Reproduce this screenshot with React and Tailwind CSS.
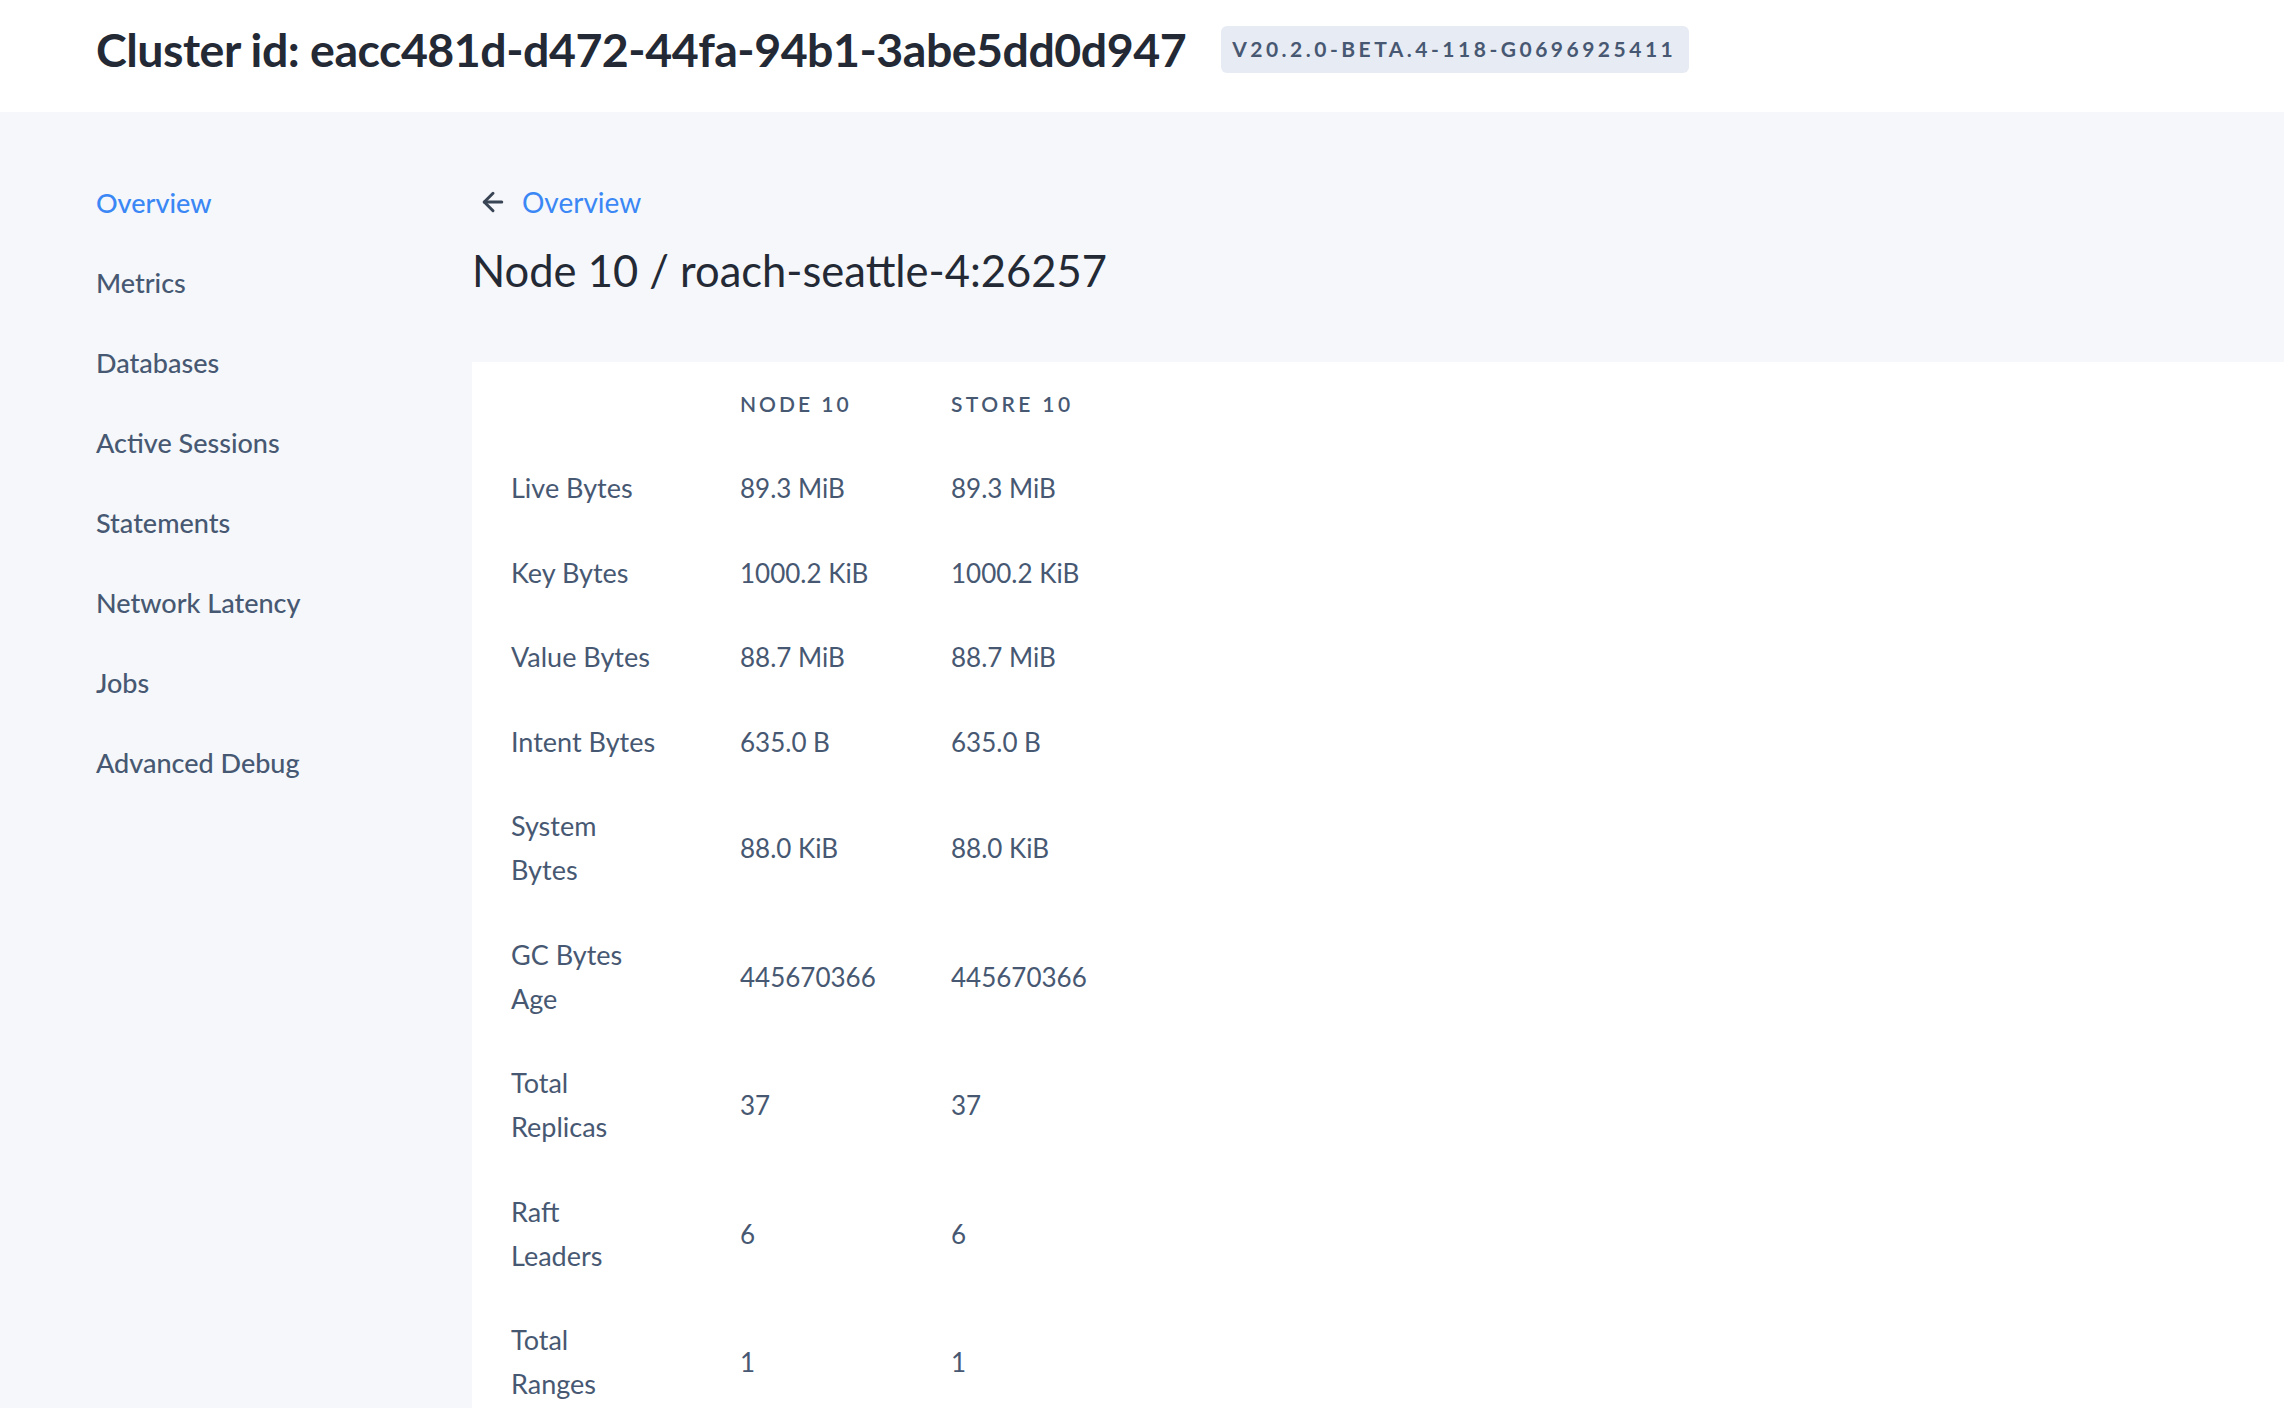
import { ArrowLeft } from "lucide-react";

const navItems = [
  "Overview",
  "Metrics",
  "Databases",
  "Active Sessions",
  "Statements",
  "Network Latency",
  "Jobs",
  "Advanced Debug",
];

// labels are split where the narrow column wraps them
const rows = [
  { label: ["Live Bytes"], value: "89.3 MiB" },
  { label: ["Key Bytes"], value: "1000.2 KiB" },
  { label: ["Value Bytes"], value: "88.7 MiB" },
  { label: ["Intent Bytes"], value: "635.0 B" },
  { label: ["System", "Bytes"], value: "88.0 KiB" },
  { label: ["GC Bytes", "Age"], value: "445670366" },
  { label: ["Total", "Replicas"], value: "37" },
  { label: ["Raft", "Leaders"], value: "6" },
  { label: ["Total", "Ranges"], value: "1" },
];

export default function App() {
  return (
    <div className="min-h-screen bg-[#f5f7fa] font-['Lato','Noto_Sans',sans-serif]">
      {/* Header */}
      <header className="flex h-[112px] items-center bg-white pb-[14px] pl-[96px]">
        <h1 className="text-[46.5px] font-bold leading-none tracking-[-0.5px] text-[#242a35]">
          Cluster id: eacc481d-d472-44fa-94b1-3abe5dd0d947
        </h1>
        <span className="ml-[35px] flex h-[47px] items-center rounded-[6px] bg-[#e7ebf3] pl-[11px] pr-[13px] text-[21px] font-bold tracking-[3.5px] text-[#475872]">
          V20.2.0-BETA.4-118-G0696925411
        </span>
      </header>

      <div className="flex">
        {/* Sidebar */}
        <nav className="w-[472px] shrink-0 pl-[96px] pt-[51px]">
          <ul>
            {navItems.map((item, i) => (
              <li
                key={item}
                className={
                  i === 0
                    ? "py-5 text-[27px] font-medium leading-[40px] text-[#3a87f5]"
                    : "py-5 text-[27px] font-medium leading-[40px] text-[#475872]"
                }
              >
                {item}
              </li>
            ))}
          </ul>
        </nav>

        {/* Main */}
        <main className="flex-1 pt-[68px]">
          <div className="flex h-[44px] items-center">
            <ArrowLeft size={30} strokeWidth={2.4} className="ml-[6px] text-[#394455]" />
            <span className="ml-[14px] text-[28px] leading-none text-[#3a87f5]">Overview</span>
          </div>
          <h2 className="mt-[18px] h-[56px] text-[43.5px] leading-[56px] text-[#242a35]">
            Node 10 / roach-seattle-4:26257
          </h2>

          <section className="mt-[64px] bg-white pl-[39px]">
            <div className="grid grid-cols-[229px_211px_211px] text-[27px] leading-[44px] text-[#475872]">
              <div className="py-5" />
              <div className="py-5 text-[21px] font-semibold tracking-[3px]">NODE 10</div>
              <div className="py-5 text-[21px] font-semibold tracking-[3.4px]">STORE 10</div>
              {rows.map((row) => (
                <div key={row.label.join(" ")} className="contents">
                  <div className="py-[20.25px]">
                    {row.label.map((line) => (
                      <div key={line}>{line}</div>
                    ))}
                  </div>
                  <div className="flex items-center py-[20.25px] text-[26px]">{row.value}</div>
                  <div className="flex items-center py-[20.25px] text-[26px]">{row.value}</div>
                </div>
              ))}
            </div>
          </section>
        </main>
      </div>
    </div>
  );
}
